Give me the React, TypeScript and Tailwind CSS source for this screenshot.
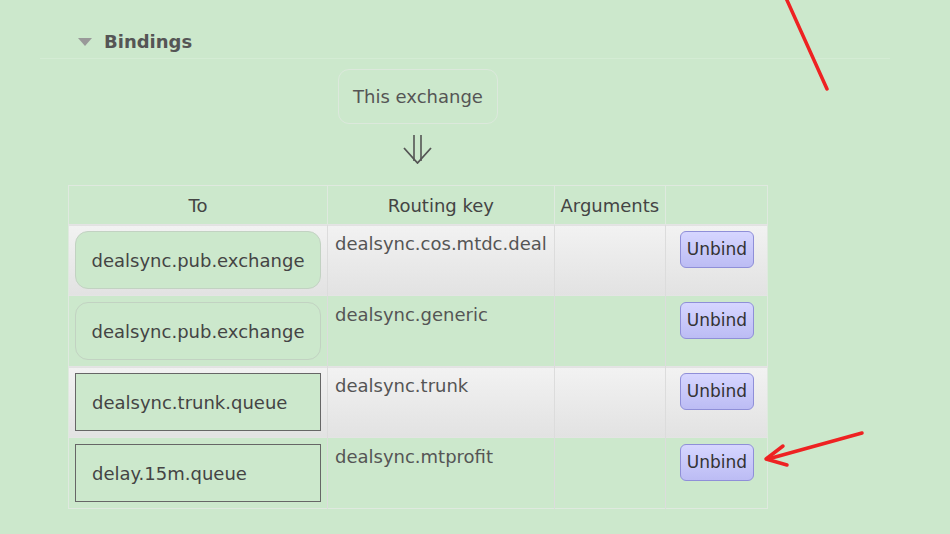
import React from 'react';

type Binding = {
  to: string;
  kind: 'exchange' | 'queue';
  key: string;
};

const BINDINGS: Binding[] = [
  { to: 'dealsync.pub.exchange', kind: 'exchange', key: 'dealsync.cos.mtdc.deal' },
  { to: 'dealsync.pub.exchange', kind: 'exchange', key: 'dealsync.generic' },
  { to: 'dealsync.trunk.queue', kind: 'queue', key: 'dealsync.trunk' },
  { to: 'delay.15m.queue', kind: 'queue', key: 'dealsync.mtprofit' },
];

const font = { fontFamily: '"DejaVu Sans", Verdana, sans-serif' };

export default function App() {
  return (
    <div
      className="relative w-[950px] h-[534px] overflow-hidden bg-[#cce8cc] text-[#4a4a4a]"
      style={font}
    >
      {/* heading */}
      <div className="flex items-center gap-[12px] pl-[78px] pt-[30px]">
        <span className="block w-0 h-0 border-l-[7px] border-r-[7px] border-t-[8px] border-l-transparent border-r-transparent border-t-[#999]" />
        <h2 className="text-[18px] font-bold text-[#555] leading-[23px]">Bindings</h2>
      </div>
      <div className="ml-[40px] mr-[60px] mt-[5px] h-px bg-[#d4ecd4]" />

      <div className="ml-[68px] w-[700px] flex flex-col items-center">
        {/* this exchange */}
        <div className="mt-[10px] h-[55px] w-[160px] rounded-[11px] border border-[#dce8dc] flex items-center justify-center text-[18px] text-[#555]">
          This exchange
        </div>
        {/* double down arrow */}
        <div className="h-[61px] pt-[11px]">
          <svg width="30" height="29" viewBox="0 0 30 29">
            <path d="M11 0 V26 M18 0 V26" stroke="#555" strokeWidth="1.6" fill="none" />
            <path d="M1 13 L14.5 28 L28 13" stroke="#555" strokeWidth="1.8" fill="none" strokeLinejoin="miter" />
          </svg>
        </div>

        {/* table */}
        <table className="w-[700px] border-collapse border border-[#dfe9df] text-[18px]">
          <thead>
            <tr className="h-[39px]">
              <th className="w-[259px] font-normal text-center border-r border-[#dfe9df] text-[#444]">To</th>
              <th className="w-[226px] font-normal text-center border-r border-[#dfe9df] text-[#444]">Routing key</th>
              <th className="w-[112px] font-normal text-center border-r border-[#dfe9df] text-[#444]">Arguments</th>
              <th className="w-[103px]" />
            </tr>
          </thead>
          <tbody>
            {BINDINGS.map((b, i) => {
              const alt = i % 2 === 0;
              return (
                <tr
                  key={i}
                  className={`h-[70px] border-t border-[#e4e4e4] ${alt ? 'bg-gradient-to-b from-[#f2f2f2] to-[#e2e2e2]' : ''}`}
                >
                  <td className="px-[6px] py-[6px] align-top border-r border-[#dcdcdc]">
                    <div
                      className={`h-[58px] w-[246px] flex items-center bg-[#cce8cc] text-[#444] ${
                        b.kind === 'exchange'
                          ? 'justify-center rounded-[13px] border border-[#c2d2c2]'
                          : 'justify-start pl-[16px] border border-[#666]'
                      }`}
                    >
                      {b.to}
                    </div>
                  </td>
                  <td className="px-[7px] pt-[5px] align-top border-r border-[#dcdcdc] text-[#555]">{b.key}</td>
                  <td className="align-top border-r border-[#dcdcdc]" />
                  <td className="align-top pt-[6px] pl-[14px]">
                    <button className="h-[37px] w-[74px] rounded-[6px] border border-[#8f8fd8] bg-gradient-to-b from-[#d6d6ff] to-[#bcbcf4] text-[17px] text-[#333]">
                      Unbind
                    </button>
                  </td>
                </tr>
              );
            })}
          </tbody>
        </table>
      </div>

      {/* annotation arrows */}
      <svg className="absolute left-0 top-0 pointer-events-none" width="950" height="534">
        <line x1="786" y1="-2" x2="827" y2="89" stroke="#ee2222" strokeWidth="3.5" strokeLinecap="round" />
        <line x1="862" y1="433" x2="768" y2="459" stroke="#ee2222" strokeWidth="3.5" strokeLinecap="round" />
        <path d="M783 446 L766 459 L787 465" fill="none" stroke="#ee2222" strokeWidth="3.5" strokeLinecap="round" strokeLinejoin="round" />
      </svg>
    </div>
  );
}
